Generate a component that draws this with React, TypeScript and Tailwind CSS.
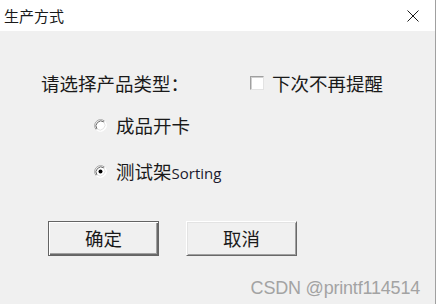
import React from "react";

const cjk = { fontFamily: '"Noto Sans CJK SC", "Noto Sans", sans-serif' };

function Radio({ checked }: { checked?: boolean }) {
   return (
      <svg width="13" height="13" viewBox="0 0 13 13" className="shrink-0">
         <circle cx="6.5" cy="6.5" r="6" fill="#ffffff" />
         <path d="M2.26 10.74 A6 6 0 0 1 10.74 2.26" fill="none" stroke="#a0a0a0" strokeWidth="1" />
         <path d="M3.0 10.0 A5 5 0 0 1 10.0 3.0" fill="none" stroke="#696969" strokeWidth="1" />
         <path d="M10.74 2.26 A6 6 0 0 1 2.26 10.74" fill="none" stroke="#ffffff" strokeWidth="1" />
         <path d="M10.0 3.0 A5 5 0 0 1 3.0 10.0" fill="none" stroke="#e3e3e3" strokeWidth="1" />
         {checked && <circle cx="6.5" cy="6.5" r="2" fill="#000000" />}
      </svg>
   );
}

export default function App() {
   return (
      <div
         className="w-[436px] h-[304px] bg-[#f0f0f0] flex flex-col border-r border-[#a0a0a0] text-[#1a1a1a]"
         style={cjk}
      >
         {/* Title bar */}
         <div className="h-[31px] bg-white flex items-center justify-between pl-[4px] pr-[16px]">
            <span className="text-[15px] leading-none">生产方式</span>
            <svg width="12" height="12" viewBox="0 0 12 12">
               <path d="M0.5 0.5 L11.5 11.5 M11.5 0.5 L0.5 11.5" stroke="#1a1a1a" strokeWidth="1" />
            </svg>
         </div>

         {/* Prompt row */}
         <div className="mt-[41px] h-[22px] flex items-center pl-[41px] text-[18.5px] leading-none">
            <span className="w-[209px]">请选择产品类型：</span>
            <div className="flex items-center gap-[8px]">
               <span className="w-[14px] h-[14px] bg-white border border-t-[#a0a0a0] border-l-[#a0a0a0] border-b-[#e3e3e3] border-r-[#e3e3e3] shadow-[inset_1px_1px_0_#d0d0d0]" />
               <span>下次不再提醒</span>
            </div>
         </div>

         {/* Options */}
         <div className="mt-[20px] h-[22px] flex items-center gap-[9px] pl-[94px] text-[18.5px] leading-none">
            <Radio />
            <span>成品开卡</span>
         </div>
         <div className="mt-[24px] h-[22px] flex items-center gap-[9px] pl-[94px] text-[18.5px] leading-none">
            <Radio checked />
            <span>
               测试架
               <span className="text-[15px] text-[#1a1a2e]" style={{ fontFamily: '"Open Sans", sans-serif' }}>
                  Sorting
               </span>
            </span>
         </div>

         {/* Buttons */}
         <div className="mt-[39px] flex gap-[27px] pl-[48px]">
            <button className="w-[111px] h-[35px] bg-[#f0f0f0] border border-[#646464] shadow-[inset_1px_1px_0_#ffffff,inset_-1px_-1px_0_#696969,inset_-2px_-2px_0_#a0a0a0] text-[18.5px] leading-none">
               确定
            </button>
            <button className="w-[111px] h-[35px] bg-[#f0f0f0] border border-t-[#ffffff] border-l-[#ffffff] border-b-[#696969] border-r-[#696969] shadow-[inset_1px_1px_0_#e3e3e3,inset_-1px_-1px_0_#a0a0a0] text-[18.5px] leading-none">
               取消
            </button>
         </div>

         {/* Watermark */}
         <div
            className="mt-[22px] pr-[15px] text-right text-[18px] leading-[20px] tracking-[-0.2px] text-[#a3a3a3]"
            style={{ fontFamily: '"Liberation Sans", Arial, sans-serif' }}
         >
            CSDN @printf114514
         </div>
      </div>
   );
}
